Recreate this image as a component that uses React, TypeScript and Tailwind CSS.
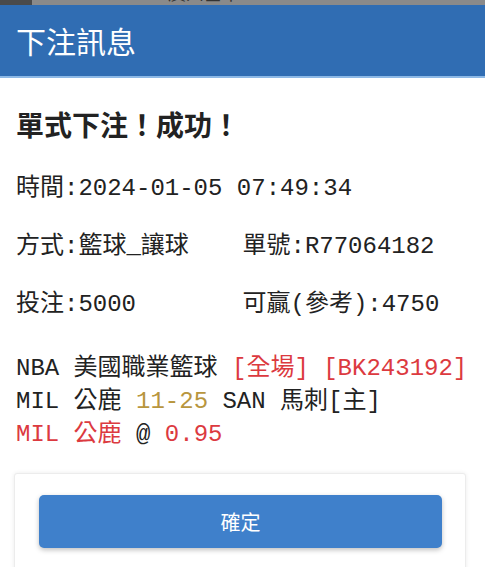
const mono = { fontFamily: '"Liberation Mono", "Noto Sans CJK TC", monospace' };

export default function App() {
  return (
    <div className="w-[485px] h-[567px] overflow-hidden bg-white" style={mono}>
      {/* page behind the dialog, only its last pixels show */}
      <div className="h-[5px] overflow-hidden flex bg-[#8a8a8a]">
        <div className="w-[32px] bg-[#4a4a4a]" />
        <div className="-mt-[14px] pl-[38px] flex gap-[44px] text-[18px] leading-[18px] text-[#333]">
          <span>01-05</span>
          <span>廣州基本</span>
        </div>
      </div>

      <div className="h-[73px] bg-[#306db3] flex items-center px-4 border-b-2 border-[#8db9e6]">
        <h2 className="text-[30px] text-white font-['Noto_Sans_CJK_TC',sans-serif] leading-none -mt-[2px]">
          下注訊息
        </h2>
      </div>

      <div className="px-4 pt-[26px] text-[#222]">
        <h1 className="text-[28px] leading-[40px] font-bold font-['Noto_Sans_CJK_TC',sans-serif]">
          {'單式下注\uFF01成功\uFF01'}
        </h1>

        <div className="mt-[16px] text-[24px]">
          <div className="h-[58px] flex items-center">時間:2024-01-05 07:49:34</div>
          <div className="h-[58px] grid grid-cols-2 items-center">
            <span>方式:籃球_讓球</span>
            <span>單號:R77064182</span>
          </div>
          <div className="h-[58px] grid grid-cols-2 items-center">
            <span>投注:5000</span>
            <span>可贏(參考):4750</span>
          </div>
        </div>

        <div className="mt-[18px] text-[24px] leading-[33px] whitespace-nowrap">
          <div>
            NBA 美國職業籃球 <span className="text-[#dc3a3f]">[全場] [BK243192]</span>
          </div>
          <div>
            MIL 公鹿 <span className="text-[#b8963e]">11-25</span> SAN 馬刺[主]
          </div>
          <div>
            <span className="text-[#dc3a3f]">MIL 公鹿</span> @ <span className="text-[#dc3a3f]">0.95</span>
          </div>
        </div>
      </div>

      <div className="mt-[22px] ml-[14px] mr-[19px] h-[120px] bg-white border border-[#ececec] rounded-t-[3px] shadow-[0_0_4px_rgba(0,0,0,0.08)] pt-[21px] pl-[24px] pr-[23px]">
        <button className="w-full h-[53px] rounded-[5px] bg-[#3f80cb] text-white text-[20px] font-['Noto_Sans_CJK_TC',sans-serif] shadow-[0_2px_5px_rgba(0,0,0,0.25)]">
          確定
        </button>
      </div>
    </div>
  );
}
